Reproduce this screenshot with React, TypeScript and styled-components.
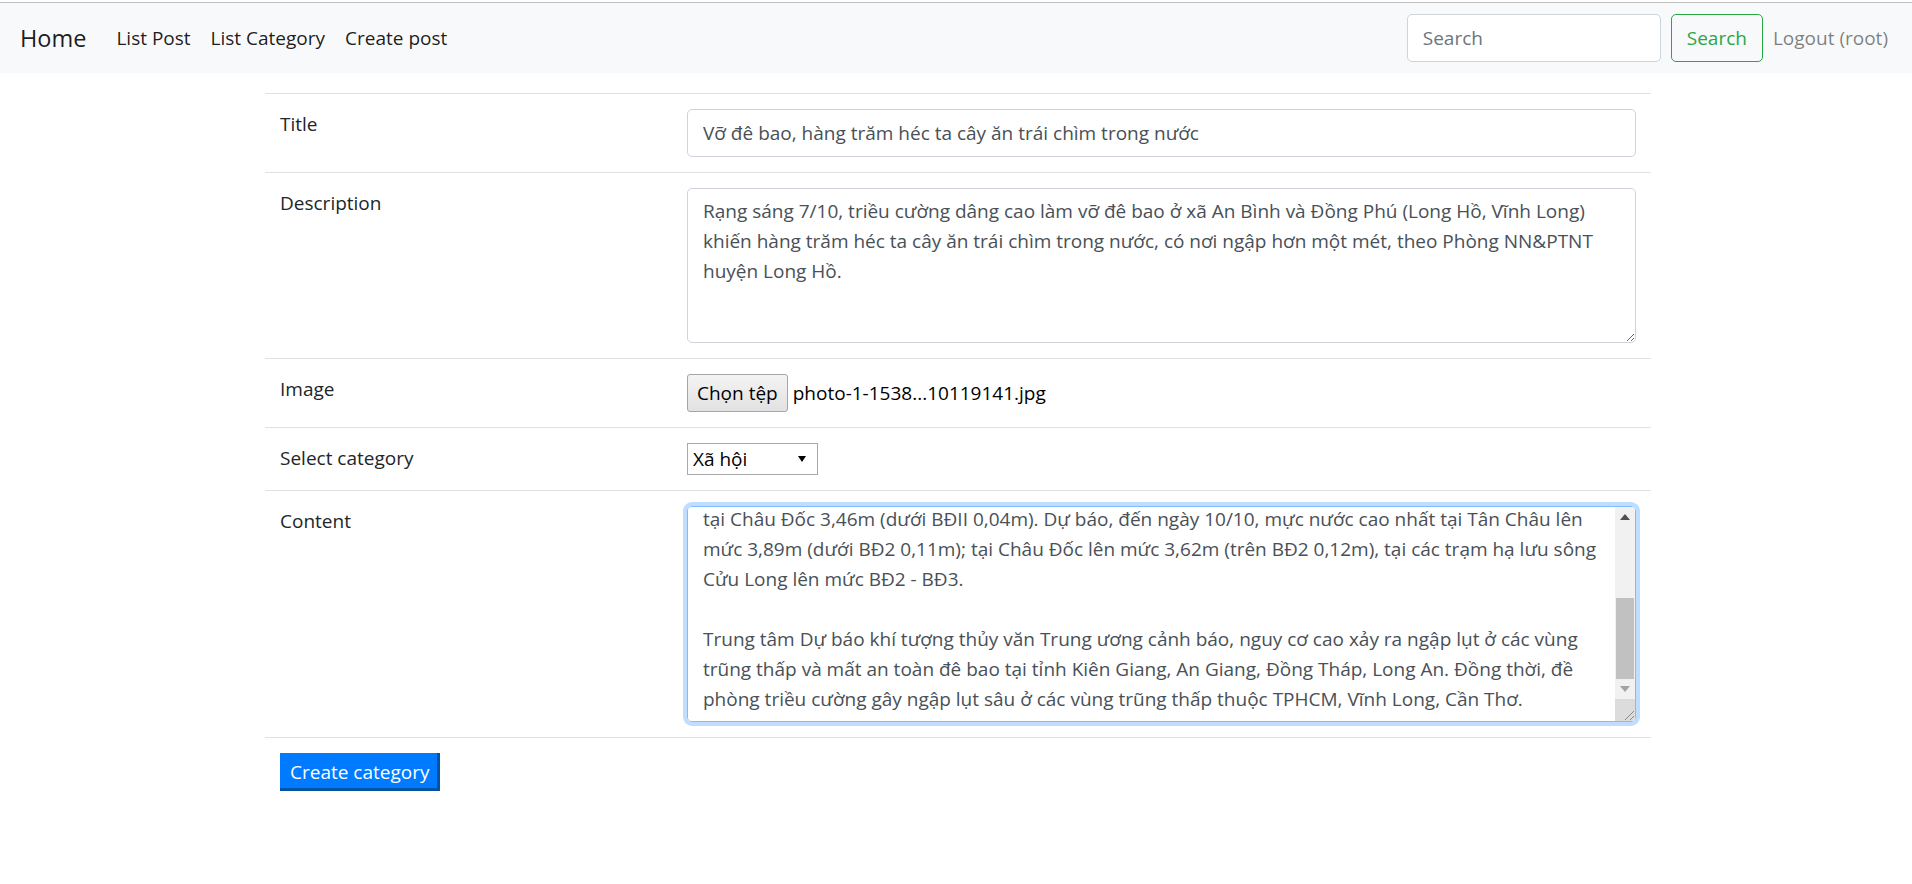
import React, { useEffect, useRef, useState } from 'react'
import styled, { createGlobalStyle } from 'styled-components'

const GlobalStyle = createGlobalStyle`
  *, *::before, *::after { box-sizing: border-box; }
  html, body { margin: 0; padding: 0; background: #fff; }
  body {
    font-family: "Open Sans", "Noto Sans", sans-serif;
    font-size: 19px;
    line-height: 30px;
    color: #212529;
  }
`

const Page = styled.div`
  padding-top: 2px;
`

const Navbar = styled.nav`
  display: flex;
  align-items: center;
  height: 71px;
  padding: 0 14px 0 20px;
  border-top: 1px solid #bfbfbf;
  background: #f8f9fa;
`

const Brand = styled.a`
  margin-right: 20px;
  font-size: 23.5px;
  line-height: 36px;
  color: rgba(0, 0, 0, 0.9);
  text-decoration: none;
`

const NavList = styled.div`
  display: flex;
  align-items: center;
`

const NavLink = styled.a<{ $muted?: boolean }>`
  padding: 0 10px;
  color: ${({ $muted }) => ($muted ? 'rgba(0, 0, 0, 0.5)' : 'rgba(0, 0, 0, 0.9)')};
  text-decoration: none;
`

const SearchForm = styled.form`
  display: flex;
  align-items: center;
  margin-left: auto;
`

const SearchInput = styled.input`
  width: 254px;
  height: 48px;
  margin-right: 10px;
  padding: 0 15px;
  font: inherit;
  color: #495057;
  background: #fff;
  border: 1px solid #ced4da;
  border-radius: 5px;
  &::placeholder { color: #6c757d; }
`

const OutlineButton = styled.button`
  height: 48px;
  padding: 0 15px;
  font: inherit;
  color: #28a745;
  background: transparent;
  border: 1px solid #28a745;
  border-radius: 5px;
`

const Container = styled.main`
  width: 1386px;
  margin: 20px 0 0 265px;
`

const Table = styled.table`
  width: 100%;
  border-collapse: collapse;
`

const Cell = styled.td<{ $label?: boolean }>`
  width: ${({ $label }) => ($label ? '407px' : 'auto')};
  padding: 15px;
  vertical-align: top;
  border-top: 1px solid #dee2e6;
`

const TextInput = styled.input`
  display: block;
  width: 100%;
  height: 48px;
  padding: 0 15px;
  font: inherit;
  color: #495057;
  background: #fff;
  border: 1px solid #ced4da;
  border-radius: 5px;
`

const TextArea = styled.textarea<{ $height: number; $gutter?: boolean }>`
  display: block;
  width: 100%;
  height: ${({ $height }) => $height}px;
  padding: 7px ${({ $gutter }) => ($gutter ? '35px' : '15px')} 7px 15px;
  font: inherit;
  color: #495057;
  background: #fff;
  border: 1px solid #ced4da;
  border-radius: 5px;
  overflow-y: auto;
  scrollbar-width: none;

  &:focus {
    outline: 0;
    border-color: #80bdff;
    box-shadow: 0 0 0 4px rgba(0, 123, 255, 0.25);
  }
`

const EditorWrap = styled.div`
  position: relative;
`

/* drawn scrollbar, laid over the right edge of the editor */
const Scrollbar = styled.div`
  position: absolute;
  top: 1px;
  right: 1px;
  bottom: 1px;
  width: 20px;
  display: flex;
  flex-direction: column;
  background: #f1f1f1;
  border-radius: 0 4px 4px 0;
  overflow: hidden;
  pointer-events: none;
`

const ScrollArrow = styled.div`
  flex: 0 0 20px;
  display: flex;
  align-items: center;
  justify-content: center;
`

const ScrollTrack = styled.div`
  position: relative;
  flex: 1;
`

const ScrollThumb = styled.div`
  position: absolute;
  left: 1px;
  right: 1px;
  background: #c1c1c1;
`

const ScrollCorner = styled.div`
  flex: 0 0 22px;
  display: flex;
  align-items: flex-end;
  justify-content: flex-end;
  background: #dcdcdc;
`

const FileRow = styled.div`
  display: flex;
  align-items: center;
  color: #000;
`

const FileButton = styled.button`
  height: 38px;
  margin-right: 5px;
  padding: 0 9px;
  font: inherit;
  color: #000;
  background: linear-gradient(#f4f4f4, #e2e2e2);
  border: 1px solid #a6a6a6;
  border-radius: 3px;
`

const Select = styled.select`
  display: block;
  width: 131px;
  height: 32px;
  padding: 0 26px 0 5px;
  font: inherit;
  color: #000;
  appearance: none;
  border: 1px solid #a9a9a9;
  border-radius: 0;
  background: #fff url("data:image/svg+xml;utf8,<svg xmlns='http://www.w3.org/2000/svg' width='8' height='6'><polygon points='0,0 8,0 4,6' fill='%23000'/></svg>") no-repeat right 11px center;
`

const SubmitButton = styled.button`
  height: 38px;
  padding: 2px 8px 0 10px;
  font: inherit;
  line-height: 30px;
  color: #fff;
  background: #007bff;
  border: 0;
  border-right: 3px solid #0052a3;
  border-bottom: 3px solid #0052a3;
`

const title = 'Vỡ đê bao, hàng trăm héc ta cây ăn trái chìm trong nước'

const description = [
  'Rạng sáng 7/10, triều cường dâng cao làm vỡ đê bao ở xã An Bình và Đồng Phú (Long Hồ, Vĩnh Long)',
  'khiến hàng trăm héc ta cây ăn trái chìm trong nước, có nơi ngập hơn một mét, theo Phòng NN&PTNT',
  'huyện Long Hồ.',
].join('\n')

const content = [
  'Ông Nguyễn Văn Liêm, Phó chủ tịch UBND huyện Long Hồ, cho biết nước tràn qua đê bao rất nhanh,',
  'người dân không kịp trở tay. Chính quyền địa phương đã huy động lực lượng dân quân, công an cùng',
  'người dân gia cố đê bao, khắc phục các điểm bị vỡ.',
  '',
  'Theo Trung tâm Dự báo khí tượng thủy văn Trung ương, mực nước trên sông Tiền, sông Hậu đang lên',
  'theo triều cường. Mực nước cao nhất ngày 7/10 tại Tân Châu 3,84m (dưới BĐII 0,16m), sông Hậu',
  'tại Châu Đốc 3,46m (dưới BĐII 0,04m). Dự báo, đến ngày 10/10, mực nước cao nhất tại Tân Châu lên',
  'mức 3,89m (dưới BĐ2 0,11m); tại Châu Đốc lên mức 3,62m (trên BĐ2 0,12m), tại các trạm hạ lưu sông',
  'Cửu Long lên mức BĐ2 - BĐ3.',
  '',
  'Trung tâm Dự báo khí tượng thủy văn Trung ương cảnh báo, nguy cơ cao xảy ra ngập lụt ở các vùng',
  'trũng thấp và mất an toàn đê bao tại tỉnh Kiên Giang, An Giang, Đồng Tháp, Long An. Đồng thời, đề',
  'phòng triều cường gây ngập lụt sâu ở các vùng trũng thấp thuộc TPHCM, Vĩnh Long, Cần Thơ.',
].join('\n')

export default function App() {
  const contentRef = useRef<HTMLTextAreaElement>(null)
  const [thumb, setThumb] = useState({ size: 49, offset: 51 })

  const syncThumb = () => {
    const el = contentRef.current
    if (!el) return
    const visible = el.clientHeight / el.scrollHeight
    const room = el.scrollHeight - el.clientHeight
    const pos = room > 0 ? el.scrollTop / room : 0
    setThumb({ size: visible * 100, offset: pos * (100 - visible * 100) })
  }

  // editor is focused, caret at the end, scrolled to the bottom
  useEffect(() => {
    const el = contentRef.current
    if (!el) return
    el.focus()
    el.setSelectionRange(el.value.length, el.value.length)
    el.scrollTop = el.scrollHeight
    syncThumb()
  }, [])

  return (
    <Page>
      <GlobalStyle />
      <Navbar>
        <Brand href="#">Home</Brand>
        <NavList>
          <NavLink href="#">List Post</NavLink>
          <NavLink href="#">List Category</NavLink>
          <NavLink href="#">Create post</NavLink>
        </NavList>
        <SearchForm onSubmit={(e) => e.preventDefault()}>
          <SearchInput type="search" placeholder="Search" />
          <OutlineButton type="submit">Search</OutlineButton>
        </SearchForm>
        <NavLink $muted href="#">Logout (root)</NavLink>
      </Navbar>

      <Container>
        <Table>
          <tbody>
            <tr>
              <Cell $label>Title</Cell>
              <Cell>
                <TextInput type="text" defaultValue={title} />
              </Cell>
            </tr>
            <tr>
              <Cell $label>Description</Cell>
              <Cell>
                <TextArea $height={155} defaultValue={description} />
              </Cell>
            </tr>
            <tr>
              <Cell $label>Image</Cell>
              <Cell>
                <FileRow>
                  <FileButton type="button">Chọn tệp</FileButton>
                  <span>photo-1-1538...10119141.jpg</span>
                </FileRow>
              </Cell>
            </tr>
            <tr>
              <Cell $label>Select category</Cell>
              <Cell>
                <Select defaultValue="xa-hoi">
                  <option value="xa-hoi">Xã hội</option>
                  <option value="the-gioi">Thế giới</option>
                  <option value="kinh-doanh">Kinh doanh</option>
                </Select>
              </Cell>
            </tr>
            <tr>
              <Cell $label>Content</Cell>
              <Cell>
                <EditorWrap>
                  <TextArea
                    ref={contentRef}
                    $height={216}
                    $gutter
                    defaultValue={content}
                    onScroll={syncThumb}
                  />
                  <Scrollbar>
                    <ScrollArrow>
                      <svg width="10" height="6" viewBox="0 0 10 6">
                        <polygon points="0,6 5,0 10,6" fill="#505050" />
                      </svg>
                    </ScrollArrow>
                    <ScrollTrack>
                      <ScrollThumb style={{ top: `${thumb.offset}%`, height: `${thumb.size}%` }} />
                    </ScrollTrack>
                    <ScrollArrow>
                      <svg width="10" height="6" viewBox="0 0 10 6">
                        <polygon points="0,0 10,0 5,6" fill="#a3a3a3" />
                      </svg>
                    </ScrollArrow>
                    <ScrollCorner>
                      <svg width="14" height="14" viewBox="0 0 14 14">
                        <path d="M13 4 L4 13 M13 9 L9 13" stroke="#8a8a8a" strokeWidth="1" />
                      </svg>
                    </ScrollCorner>
                  </Scrollbar>
                </EditorWrap>
              </Cell>
            </tr>
            <tr>
              <Cell colSpan={2}>
                <SubmitButton type="submit">Create category</SubmitButton>
              </Cell>
            </tr>
          </tbody>
        </Table>
      </Container>
    </Page>
  )
}
